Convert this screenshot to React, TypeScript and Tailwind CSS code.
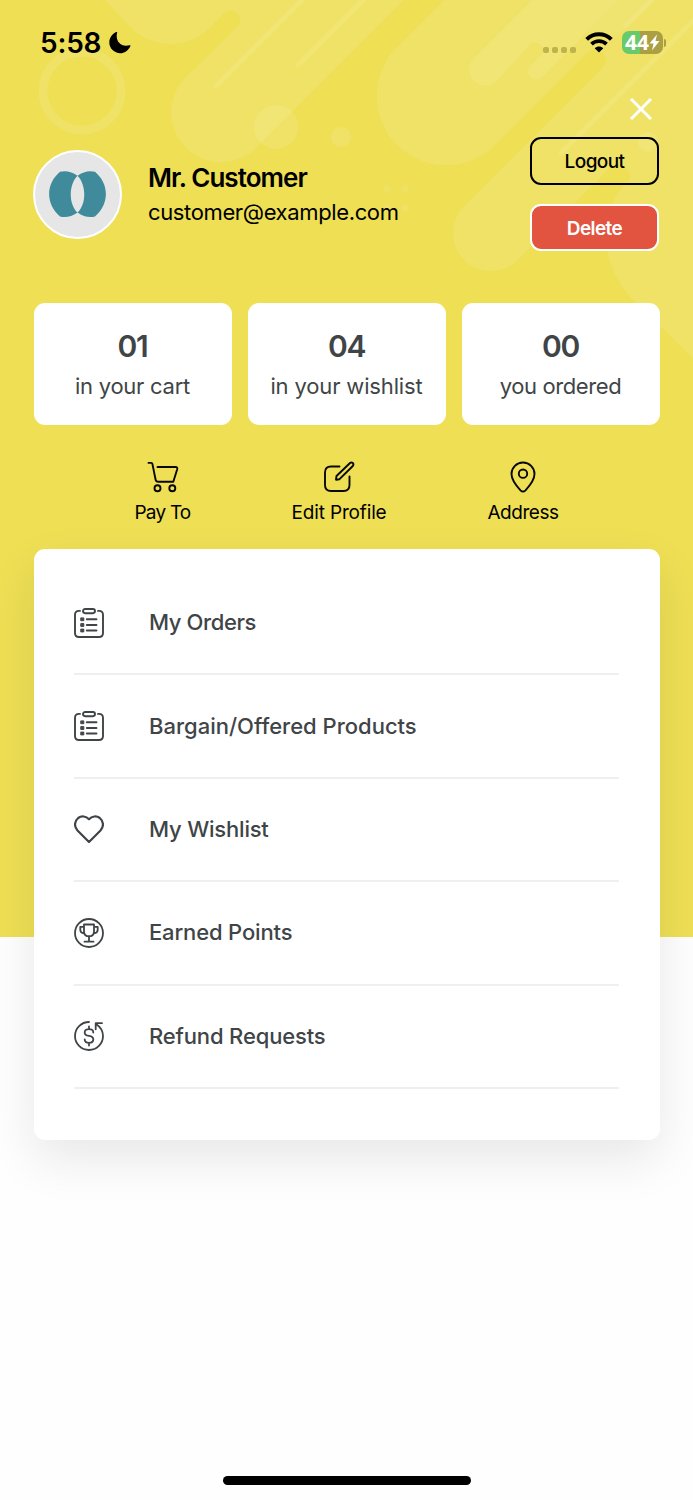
import React from "react";

type IconProps = { className?: string };

const Backdrop = () => (
  <svg className="absolute left-0 top-0" width="693" height="420" viewBox="0 0 693 420" fill="none">
    <g fill="#fff" fillOpacity="0.1">
      <path d="M105 0L130 27A57 57 0 0 0 211 27L225 12A10 10 0 0 1 239 25L183 80A50 50 0 0 0 254 150L404 0Z" />
      <path d="M444 0L397 47A69 69 0 0 0 495 145L587 53A10.6 10.6 0 0 1 603 67L464 206A38 38 0 0 0 518 260L612 166A13 13 0 0 1 630 180L622 188C600 212 596 264 636 303L693 358V0Z" />
      <path d="M532 0L474 58A16 16 0 0 0 497 81L531 43A9 9 0 0 1 543 53L530 66A8 8 0 0 0 542 77L619 0Z" />
      <path d="M619 0L588 31Q600 40 612 36Q620 34 626 28L654 0Z" fillOpacity="0.07" />
      <circle cx="276" cy="127" r="22" />
      <circle cx="341" cy="137" r="10" />
      <circle cx="648" cy="142" r="10" />
      <circle cx="387" cy="189" r="4" fillOpacity="0.07" />
      <circle cx="405" cy="189" r="4" fillOpacity="0.07" />
      <circle cx="387" cy="208" r="4" fillOpacity="0.07" />
      <circle cx="405" cy="208" r="4" fillOpacity="0.07" />
    </g>
    <g stroke="#fff" strokeOpacity="0.1" strokeLinecap="round">
      <circle cx="82" cy="91" r="39" strokeWidth="9" />
      <path d="M216 86L304 -2M298 65L366 -3M561 153L716 -2M626 26L656 -4" strokeWidth="5" />
    </g>
  </svg>
);

const Moon = () => (
  <svg width="22" height="22" viewBox="0 0 22 22">
    <path d="M8.2 .3C6 8 11 15.6 20.6 13.2C21.4 13 21.7 13.4 21.3 14.2C19 19 15.400 21.200 11.200 21.200A10.900 10.900 0 0 1 .3 10.500C.3 6 3 2 7.300 .1C8 -.2 8.400 -.1 8.200 .3Z" />
  </svg>
);

const Wifi = () => (
  <svg width="28" height="21" viewBox="0 0 28 21" fill="none" stroke="#000">
    <path d="M1.700 7.300C8.500 .6 19.500 .6 26.300 7.300" strokeWidth="4" />
    <path d="M6.500 12.200C10.700 8.200 17.300 8.200 21.500 12.200" strokeWidth="3.800" />
    <path d="M14 20.500L9.700 16.200C12.200 14 15.800 14 18.300 16.200Z" fill="#000" stroke="none" />
  </svg>
);

const Cart = () => (
  <svg width="32" height="32" viewBox="0 0 32 32" fill="none" stroke="#080808" strokeWidth="1.900" strokeLinecap="round" strokeLinejoin="round">
    <path d="M1.500 1.900H4.300Q5.200 1.900 5.400 2.900L8.600 18.800Q9 20.700 10.700 20.700H26.300L30.200 8.200Q30.700 6 28.600 6H10.500" />
    <circle cx="10.500" cy="27.300" r="3" />
    <circle cx="25.300" cy="27.300" r="3" />
  </svg>
);

const Edit = () => (
  <svg width="32" height="32" viewBox="0 0 32 32" fill="none" stroke="#080808" strokeWidth="1.900" strokeLinecap="round" strokeLinejoin="round">
    <path d="M16.500 5.500H8Q2 5.500 2 11.500V24Q2 30 8 30H20.500Q26.500 30 26.500 24V15.500" />
    <path d="M13.500 15L27 2Q28.500 .9 29.800 2Q31 3.300 29.800 5L16.500 18.200L13 18.700Z" />
  </svg>
);

const Pin = () => (
  <svg width="32" height="32" viewBox="0 0 32 32" fill="none" stroke="#080808" strokeWidth="1.900">
    <path d="M16 1.500A11.500 11.500 0 0 0 4.500 13C4.500 19 9.500 25 13.500 29.300Q16 31.800 18.500 29.300C22.500 25 27.500 19 27.500 13A11.500 11.500 0 0 0 16 1.500Z" />
    <circle cx="16" cy="12.700" r="4.200" />
  </svg>
);

const Clipboard = ({ className }: IconProps) => (
  <svg className={className} width="30" height="30" viewBox="0 0 30 30" fill="none" stroke="#3f4547" strokeWidth="1.900" strokeLinecap="round">
    <path d="M6 2.900H5Q1 2.900 1 6.900V25Q1 29 5 29H25Q29 29 29 25V6.900Q29 2.900 25 2.900H24" />
    <rect x="9" y="1" width="12" height="4.200" rx="2.100" />
    <path d="M12.800 11.300H22.500M12.800 17H22.500M12.800 22.500H22.500" />
    <path d="M7.100 9.900h2.700v2.800h-2.700zM7.100 15.600h2.700v2.800h-2.700zM7.100 21.100h2.700v2.800h-2.700z" fill="#3f4547" strokeWidth="1" />
  </svg>
);

const Heart = ({ className }: IconProps) => (
  <svg className={className} width="30" height="30" viewBox="0 0 30 30" fill="none" stroke="#3f4547" strokeWidth="2.200" strokeLinejoin="round">
    <path d="M15 28L3.500 16.500C-.2 12.500 .5 7 4.200 4C7.500 1.500 12 2 15 5.300C18 2 22.500 1.500 25.800 4C29.500 7 30.200 12.500 26.500 16.500Z" />
  </svg>
);

const Trophy = ({ className }: IconProps) => (
  <svg className={className} width="30" height="30" viewBox="0 0 30 30" fill="none" stroke="#3f4547" strokeWidth="1.800" strokeLinecap="round" strokeLinejoin="round">
    <circle cx="15" cy="15" r="14" />
    <path d="M10 6.500H20V14Q19.800 17.300 17 18.200H13Q10.200 17.300 10 14ZM15 18.200V23.500M10.500 23.700H19.500M10 8.800H6.300V12Q6.500 15 10 15.300M20 8.800H23.700V12Q23.500 15 20 15.300" />
  </svg>
);

const Refund = ({ className }: IconProps) => (
  <svg className={className} width="30" height="30" viewBox="0 0 30 30" fill="none" stroke="#3f4547" strokeWidth="1.800" strokeLinecap="round" strokeLinejoin="round">
    <path d="M15 1A14 14 0 1 0 29 15C29 10 26.500 6 22 3M28 2.200H21.700V8.300" />
    <path d="M19.300 11.500Q19.300 8.200 15 8.200Q10.700 8.200 10.700 11.500Q10.700 14.500 15 14.900Q19.300 15.500 19.300 18.500Q19.300 21.800 15 21.800Q10.700 21.800 10.700 18.500M15 5.500V8.200M15 21.800V24.500" />
  </svg>
);

const stats = [
  { value: "01", label: "in your cart", tracking: "tracking-[-0.25px]" },
  { value: "04", label: "in your wishlist", tracking: "tracking-[-0.15px]" },
  { value: "00", label: "you ordered", tracking: "tracking-[-0.4px]" },
];

const menu = [
  { label: "My Orders", Icon: Clipboard, tracking: "tracking-[-0.4px]" },
  { label: "Bargain/Offered Products", Icon: Clipboard, tracking: "tracking-normal" },
  { label: "My Wishlist", Icon: Heart, tracking: "tracking-[-0.2px]" },
  { label: "Earned Points", Icon: Trophy, tracking: "tracking-[-0.15px]" },
  { label: "Refund Requests", Icon: Refund, tracking: "tracking-[-0.15px]" },
];

export default function App() {
  return (
    <div className="relative flex h-[1500px] w-[693px] flex-col overflow-hidden bg-[linear-gradient(#eedf55_0_937px,#fefefe_937px)] font-['Inter',sans-serif] text-black">
      <Backdrop />
      <div className="relative flex h-[86px] items-start justify-between pl-[40px] pr-[27px]">
        <div className="flex items-center gap-2 pt-[25px]">
          <span className="text-[28px] font-semibold leading-9 tracking-[-0.2px]">5:58</span>
          <Moon />
        </div>
        <div className="flex items-center pt-[31px]">
          <div className="mr-[9px] mt-[14px] flex gap-[3px]">
            {[0, 1, 2, 3].map((i) => <i key={i} className="size-1.5 rounded-[2px] bg-[#bfb34b]" />)}
          </div>
          <Wifi />
          <div className="ml-[9px] flex h-[23px] w-[41px] items-center justify-center rounded-[7px] bg-[linear-gradient(90deg,#68ca6b_44%,#aa9f42_44%)] text-white">
            <span className="font-['Open_Sans',sans-serif] text-[21px] font-bold leading-[23px]">44</span>
            <svg width="11" height="17" viewBox="0 0 11 17" fill="currentColor"><path d="M8 .5L.5 9.500H4.500L3 16.500L10.500 7H6.500Z" /></svg>
          </div>
          <i className="ml-px h-[8px] w-[2px] rounded-r-full bg-[#aa9f42]" />
        </div>
      </div>
      <div className="relative flex h-[51px] justify-end pr-[41px] pt-3">
        <svg width="22" height="22" viewBox="0 0 22 22" stroke="#fff" strokeWidth="3"><path d="M1 1L21 21M21 1L1 21" /></svg>
      </div>
      <div className="relative flex h-[166px] items-start pl-[33px] pr-[34px]">
        <div className="mt-[13px] flex size-[89px] items-center justify-center rounded-full border-2 border-white bg-[#e6e6e6]">
          <svg className="-mt-[2px]" width="57" height="46" viewBox="0 0 57 46" fill="#3f8b9b">
            <path d="M11 .8Q20-1.500 28.500 4.800C19.500 14 19.500 33 28.500 41.500Q20 47.500 11 45.500C-3.500 33 -3.500 13 11 .8Z" />
            <path d="M46 .8Q37-1.500 28.500 4.800C37.500 14 37.500 33 28.500 41.500Q37 47.500 46 45.500C60.500 33 60.500 13 46 .8Z" />
          </svg>
        </div>
        <div className="ml-[26px] mt-[23px] flex flex-col">
          <span className="text-[26px] font-semibold leading-9 tracking-[-0.95px]">Mr. Customer</span>
          <span className="text-[22px] leading-8 tracking-[-0.37px]">customer@example.com</span>
        </div>
        <div className="ml-auto flex w-[129px] flex-col gap-[19px]">
          <button className="h-12 rounded-[11px] border-2 border-black pt-[3px] text-[19px] font-medium tracking-[-0.6px]">Logout</button>
          <button className="h-[47px] rounded-[11px] border-2 border-white bg-[#e25340] pt-[3px] text-[19px] font-semibold tracking-[-0.6px] text-white">Delete</button>
        </div>
      </div>
      <div className="relative grid grid-cols-3 gap-4 px-[33.500px] text-[#3f4547]">
        {stats.map((s) => (
          <div key={s.label} className="flex h-[122px] flex-col items-center rounded-[11px] bg-white pt-[25px]">
            <span className="text-[30px] font-semibold leading-9 tracking-[-1.300px]">{s.value}</span>
            <span className={`mt-[6px] text-[22px] leading-8 ${s.tracking}`}>{s.label}</span>
          </div>
        ))}
      </div>
      <div className="relative flex h-[124px] items-start gap-[101px] pl-[134.500px] pt-9 text-[19px] leading-7">
        <div className="flex w-[56px] flex-col items-center gap-[6px]"><Cart /><span className="whitespace-nowrap tracking-[-0.8px]">Pay To</span></div>
        <div className="flex w-[95px] flex-col items-center gap-[6px]"><Edit /><span className="whitespace-nowrap tracking-[-0.150px]">Edit Profile</span></div>
        <div className="flex w-[71px] flex-col items-center gap-[6px]"><Pin /><span className="whitespace-nowrap tracking-[-0.450px]">Address</span></div>
      </div>
      <div className="relative mx-[33.500px] h-[591px] rounded-[11px] bg-white px-[40.500px] pt-[23px] text-[#3f4547] shadow-[0_20px_50px_rgba(0,0,0,0.09)]">
        {menu.map(({ label, Icon, tracking }) => (
          <div key={label} className="flex h-[103.400px] items-center border-b-2 border-[#efefef]">
            <Icon className="shrink-0" />
            <span className={`ml-[45px] text-[22px] font-medium ${tracking}`}>{label}</span>
          </div>
        ))}
      </div>
      <div className="absolute bottom-[15px] left-[223px] h-[9px] w-[248px] rounded-full bg-black" />
    </div>
  );
}
